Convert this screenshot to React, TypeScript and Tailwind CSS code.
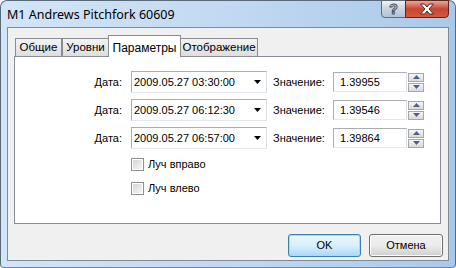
import React from "react";

const ROWS = [
  { date: "2009.05.27 03:30:00", value: "1.39955" },
  { date: "2009.05.27 06:12:30", value: "1.39546" },
  { date: "2009.05.27 06:57:00", value: "1.39864" },
];

const TABS = [
  { label: "Общие", w: "w-[47px]" },
  { label: "Уровни", w: "w-[47px]" },
  { label: "Параметры", w: "w-[73px]", active: true },
  { label: "Отображение", w: "w-[78px]" },
];

function Tab({ label, w, active }: { label: string; w: string; active?: boolean }) {
  if (active) {
    return (
      <div
        className={`${w} relative z-10 -mx-[1px] -mb-[1px] flex h-[22px] items-start justify-center border border-b-0 border-[#898c95] bg-white pt-[3px] text-[12px] text-black`}
      >
        {label}
      </div>
    );
  }
  return (
    <div
      className={`${w} flex h-[18px] items-center justify-center border border-b-0 border-[#898c95] bg-gradient-to-b from-[#f3f3f3] to-[#dedede] text-[11.5px] text-black`}
    >
      {label}
    </div>
  );
}

function Combo({ text }: { text: string }) {
  return (
    <div className="ml-[9px] flex h-[22px] w-[136px] items-center border border-[#abadb3] border-b-[#e3e9ef] border-r-[#dbdfe6] bg-white pl-[2px]">
      <span className="flex-1">{text}</span>
      <svg width="7" height="4" viewBox="0 0 7 4" className="mr-[5px]">
        <path d="M0 0h7L3.5 4z" fill="#000" />
      </svg>
    </div>
  );
}

function Spin() {
  const half = "flex h-[9px] w-[16px] items-center justify-center border border-[#a7a7a7] bg-gradient-to-b from-[#f6f6f6] to-[#dadada]";
  return (
    <div className="ml-[1px] flex h-[19px] flex-col justify-between">
      <div className={half}>
        <svg width="7" height="4" viewBox="0 0 7 4">
          <path d="M0 4L3.5 0L7 4z" fill="#4d6185" />
        </svg>
      </div>
      <div className={half}>
        <svg width="7" height="4" viewBox="0 0 7 4">
          <path d="M0 0h7L3.5 4z" fill="#4d6185" />
        </svg>
      </div>
    </div>
  );
}

function Check({ label }: { label: string }) {
  return (
    <div className="flex h-[14px] items-center">
      <div className="flex h-[13px] w-[13px] items-center justify-center border border-[#8f8f8f] bg-white">
        <div className="h-[9px] w-[9px] bg-gradient-to-br from-[#d5d5d5] to-[#f7f7f7]" />
      </div>
      <span className="ml-[4px]">{label}</span>
    </div>
  );
}

export default function App() {
  return (
    <div
      className="h-[268px] w-[456px] bg-white text-[11px] text-black"
      style={{ fontFamily: '"Liberation Sans", Arial, sans-serif' }}
    >
      <div className="flex h-full w-full flex-col rounded-t-[7px] rounded-b-[4px] border border-[#5b6a78] border-b-[#2f9fd0] bg-gradient-to-r from-[#d3e5f7] via-[#c2d9f1] to-[#a9c9ea] px-[6px]">
        {/* title bar */}
        <div className="flex h-[26px] items-start justify-between">
          <span
            className="mt-[5px] text-[12.5px] text-black"
            style={{ fontFamily: '"Noto Sans", sans-serif' }}
          >
            M1 Andrews Pitchfork 60609
          </span>
          <div className="-mt-[1px] flex">
            <div className="flex h-[18px] w-[25px] items-center justify-center rounded-bl-[4px] border border-[#5d6b7b] bg-gradient-to-b from-[#eef3f8] via-[#c9d4df] to-[#b4c3d2]">
              <span
                className="text-[14px] font-bold leading-none text-white"
                style={{ WebkitTextStroke: "1px #46525e" }}
              >
                ?
              </span>
            </div>
            <div className="-ml-[1px] flex h-[18px] w-[44px] items-center justify-center rounded-br-[4px] border border-[#5a2620] bg-gradient-to-b from-[#e8a597] via-[#c7452f] to-[#d25a3f]">
              <svg width="16" height="12" viewBox="0 0 16 12">
                <path
                  d="M1.5 1h4l2.5 3 2.5-3h4l-4.5 5 4.5 5h-4l-2.5-3-2.5 3h-4l4.5-5z"
                  fill="#fff"
                  stroke="#4a2a26"
                  strokeWidth="1"
                  strokeLinejoin="round"
                />
              </svg>
            </div>
          </div>
        </div>

        {/* client */}
        <div className="flex h-[234px] flex-col border border-[#7f8b97] bg-[#f0f0f0] pt-[6px]">
          <div className="ml-[7px] flex h-[22px] items-end">
            {TABS.map((t) => (
              <Tab key={t.label} {...t} />
            ))}
          </div>
          <div className="mx-[6px] mr-[7px] h-[168px] border border-[#898c95] bg-white pl-[78px] pt-[14px]">
            <div className="flex flex-col gap-[6px]">
              {ROWS.map((r) => (
                <div key={r.date} className="flex h-[22px] items-center">
                  <span className="w-[29px] text-right">Дата:</span>
                  <Combo text={r.date} />
                  <span className="ml-[6px] w-[56px]">Значение:</span>
                  <div className="ml-[4px] flex h-[20px] w-[74px] items-center border border-[#abadb3] border-b-[#e3e9ef] border-r-[#dbdfe6] bg-white pl-[6px]">
                    {r.value}
                  </div>
                  <Spin />
                </div>
              ))}
            </div>
            <div className="ml-[38px] mt-[8px] flex flex-col gap-[10px]">
              <Check label="Луч вправо" />
              <Check label="Луч влево" />
            </div>
          </div>
          <div className="mr-[5px] mt-[10px] flex justify-end gap-[8px]">
            <button className="h-[23px] w-[73px] rounded-[3px] border border-[#3c7fb1] bg-gradient-to-b from-[#eaf6fd] via-[#d9f0fc] to-[#a7d9f5] text-[11px] shadow-[inset_0_0_0_1px_#9fdcf7]">
              OK
            </button>
            <button className="h-[23px] w-[74px] rounded-[3px] border border-[#707070] bg-gradient-to-b from-[#f2f2f2] via-[#ebebeb] to-[#cfcfcf] text-[11px] shadow-[inset_0_0_0_1px_#fcfcfc]">
              Отмена
            </button>
          </div>
        </div>
      </div>
    </div>
  );
}
